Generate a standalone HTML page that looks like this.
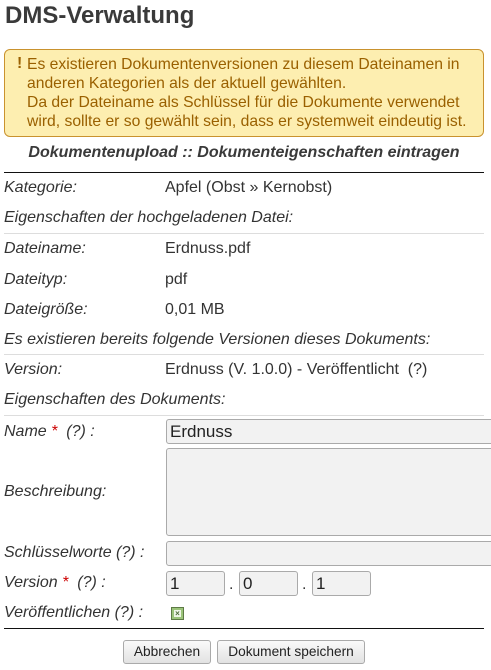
<!DOCTYPE html>
<html><head><meta charset="utf-8"><style>
*{margin:0;padding:0;box-sizing:border-box}
body{width:491px;height:670px;background:#fff;font-family:"Liberation Sans",sans-serif;color:#333;position:relative;overflow:hidden}
.a{position:absolute;white-space:nowrap}
h1{position:absolute;left:5px;top:2px;font-size:24px;font-weight:bold;color:#3a3a3a}
.warn{position:absolute;left:4px;top:49px;width:480px;height:88px;background:#fdeeb0;border:1px solid #c9922e;border-radius:6px;color:#9a6000;font-size:15.7px;line-height:19px;padding:5px 0 0 22px}
.warn b{position:absolute;left:12px;top:4px}
.l{position:absolute;left:4px;font-style:italic;font-size:16px;color:#333;white-space:nowrap}
.v{position:absolute;left:165px;font-size:16px;color:#333;white-space:nowrap}
.hr{position:absolute;left:4px;width:480px;height:1px;background:#ddd}
.in{position:absolute;background:#f2f2f2;border:1px solid #aaa;border-radius:3px;font-size:17px;padding-left:3px;line-height:23px;color:#222}
.btn{position:absolute;top:640px;height:24px;border:1px solid #aaa;border-radius:3px;background:linear-gradient(#fafafa,#e2e2e2);font-size:13.7px;text-align:center;line-height:22px;color:#222}
.r{color:#c00}
</style></head><body>
<h1>DMS-Verwaltung</h1>
<div class="warn"><b>!</b>Es existieren Dokumentenversionen zu diesem Dateinamen in<br>anderen Kategorien als der aktuell gewählten.<br>Da der Dateiname als Schlüssel für die Dokumente verwendet<br>wird, sollte er so gewählt sein, dass er systemweit eindeutig ist.</div>
<div class="a" style="left:0;width:488px;text-align:center;top:144px;font-size:16px;font-weight:bold;font-style:italic;color:#3a3a3a">Dokumentenupload :: Dokumenteigenschaften eintragen</div>
<div class="hr" style="top:172px;background:#111"></div>
<div class="l" style="top:179px">Kategorie:</div><div class="v" style="top:179px">Apfel (Obst » Kernobst)</div>
<div class="l" style="top:209px">Eigenschaften der hochgeladenen Datei:</div>
<div class="hr" style="top:233px"></div>
<div class="l" style="top:240px">Dateiname:</div><div class="v" style="top:240px">Erdnuss.pdf</div>
<div class="l" style="top:271px">Dateityp:</div><div class="v" style="top:271px">pdf</div>
<div class="l" style="top:301px">Dateigröße:</div><div class="v" style="top:301px">0,01 MB</div>
<div class="l" style="top:331px">Es existieren bereits folgende Versionen dieses Dokuments:</div>
<div class="hr" style="top:354px"></div>
<div class="l" style="top:361px">Version:</div><div class="v" style="top:361px">Erdnuss (V. 1.0.0) - Veröffentlicht&nbsp; (?)</div>
<div class="l" style="top:391px">Eigenschaften des Dokuments:</div>
<div class="hr" style="top:415px"></div>
<div class="l" style="top:423px">Name <span class="r">*</span>&nbsp; (?) :</div>
<div class="in" style="left:166px;top:419px;width:330px;height:25px">Erdnuss</div>
<div class="l" style="top:483px">Beschreibung:</div>
<div class="in" style="left:166px;top:448px;width:330px;height:88px"></div>
<div class="l" style="top:544px">Schlüsselworte (?) :</div>
<div class="in" style="left:166px;top:541px;width:330px;height:25px"></div>
<div class="l" style="top:574px">Version <span class="r">*</span>&nbsp; (?) :</div>
<div class="in" style="left:166px;top:571px;width:59px;height:25px">1</div>
<div class="a" style="left:229px;top:576px;font-size:16px">.</div>
<div class="in" style="left:239px;top:571px;width:59px;height:25px">0</div>
<div class="a" style="left:302px;top:576px;font-size:16px">.</div>
<div class="in" style="left:312px;top:571px;width:59px;height:25px">1</div>
<div class="l" style="top:604px">Veröffentlichen (?) :</div>
<div class="a" style="left:171px;top:607px;width:13px;height:13px;background:#9bc47a;border:1px solid #5d7a45;"><div style="position:absolute;left:2px;top:2px;width:7px;height:7px;background:#eef5e6;font-size:8px;line-height:7px;text-align:center;color:#4a6a35;font-weight:bold">×</div></div>
<div class="hr" style="top:628px;background:#111"></div>
<div class="btn" style="left:123px;width:88px">Abbrechen</div>
<div class="btn" style="left:217px;width:148px">Dokument speichern</div>
</body></html>
